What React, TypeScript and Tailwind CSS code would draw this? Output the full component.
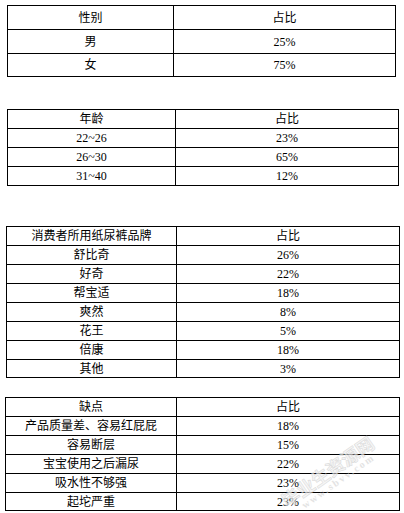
import * as React from 'react';

type Row = [string, string];

interface TableSpec {
  className: string; // margin + width
  firstCol: string; // first column width
  heights: string[]; // per-row height classes (row 1 excludes border, others include border-t)
  rows: Row[];
}

const tables: TableSpec[] = [
  {
    className: 'mt-[5px] ml-[7px] w-[389px]',
    firstCol: 'w-[166px]',
    heights: ['h-[23px]', 'h-[24px]', 'h-[23px]'],
    rows: [
      ['性别', '占比'],
      ['男', '25%'],
      ['女', '75%'],
    ],
  },
  {
    className: 'mt-[32px] ml-[7px] w-[392px]',
    firstCol: 'w-[168px]',
    heights: ['h-[18px]', 'h-[19px]', 'h-[19px]', 'h-[19px]'],
    rows: [
      ['年龄', '占比'],
      ['22~26', '23%'],
      ['26~30', '65%'],
      ['31~40', '12%'],
    ],
  },
  {
    className: 'mt-[40px] ml-[6px] w-[394px]',
    firstCol: 'w-[170px]',
    heights: [
      'h-[18px]',
      'h-[19px]',
      'h-[19px]',
      'h-[19px]',
      'h-[19px]',
      'h-[19px]',
      'h-[19px]',
      'h-[18px]',
    ],
    rows: [
      ['消费者所用纸尿裤品牌', '占比'],
      ['舒比奇', '26%'],
      ['好奇', '22%'],
      ['帮宝适', '18%'],
      ['爽然', '8%'],
      ['花王', '5%'],
      ['倍康', '18%'],
      ['其他', '3%'],
    ],
  },
  {
    className: 'mt-[19px] ml-[5px] w-[395px]',
    firstCol: 'w-[171px]',
    heights: ['h-[18px]', 'h-[19px]', 'h-[19px]', 'h-[19px]', 'h-[19px]', 'h-[18px]'],
    rows: [
      ['缺点', '占比'],
      ['产品质量差、容易红屁屁', '18%'],
      ['容易断层', '15%'],
      ['宝宝使用之后漏尿', '22%'],
      ['吸水性不够强', '23%'],
      ['起坨严重', '23%'],
    ],
  },
];

function DataTable({ spec }: { spec: TableSpec }) {
  return (
    <div className={`${spec.className} flex flex-col border border-black`}>
      {spec.rows.map((row, i) => (
        <div
          key={i}
          className={`flex ${spec.heights[i]} ${i > 0 ? 'border-t border-black' : ''}`}
        >
          <div
            className={`${spec.firstCol} flex shrink-0 items-center justify-center border-r border-black`}
          >
            {row[0]}
          </div>
          <div className="flex flex-1 items-center justify-center">{row[1]}</div>
        </div>
      ))}
    </div>
  );
}

export default function App() {
  return (
    <div
      className="relative h-[513px] w-[404px] overflow-hidden bg-white text-[12px] leading-none text-black"
      style={{ fontFamily: '"Liberation Serif", "Noto Sans CJK SC", serif' }}
    >
      {tables.map((t, i) => (
        <DataTable key={i} spec={t} />
      ))}

      {/* watermark */}
      <div className="pointer-events-none absolute left-[286px] top-[492px] origin-left -rotate-[35deg] select-none opacity-70">
        <div
          className="text-[18px] font-bold leading-none text-[#f2f2f2] [-webkit-text-stroke:0.5px_#c8c8c8]"
          style={{ fontFamily: '"Noto Sans CJK SC", sans-serif' }}
        >
          毕业生资源网
        </div>
        <div
          className="ml-[14px] mt-[1px] text-[10px] font-bold leading-none tracking-[2px] text-[#d8d8d8]"
          style={{ fontFamily: '"Liberation Serif", serif' }}
        >
          www.sbvv.com
        </div>
      </div>
    </div>
  );
}
